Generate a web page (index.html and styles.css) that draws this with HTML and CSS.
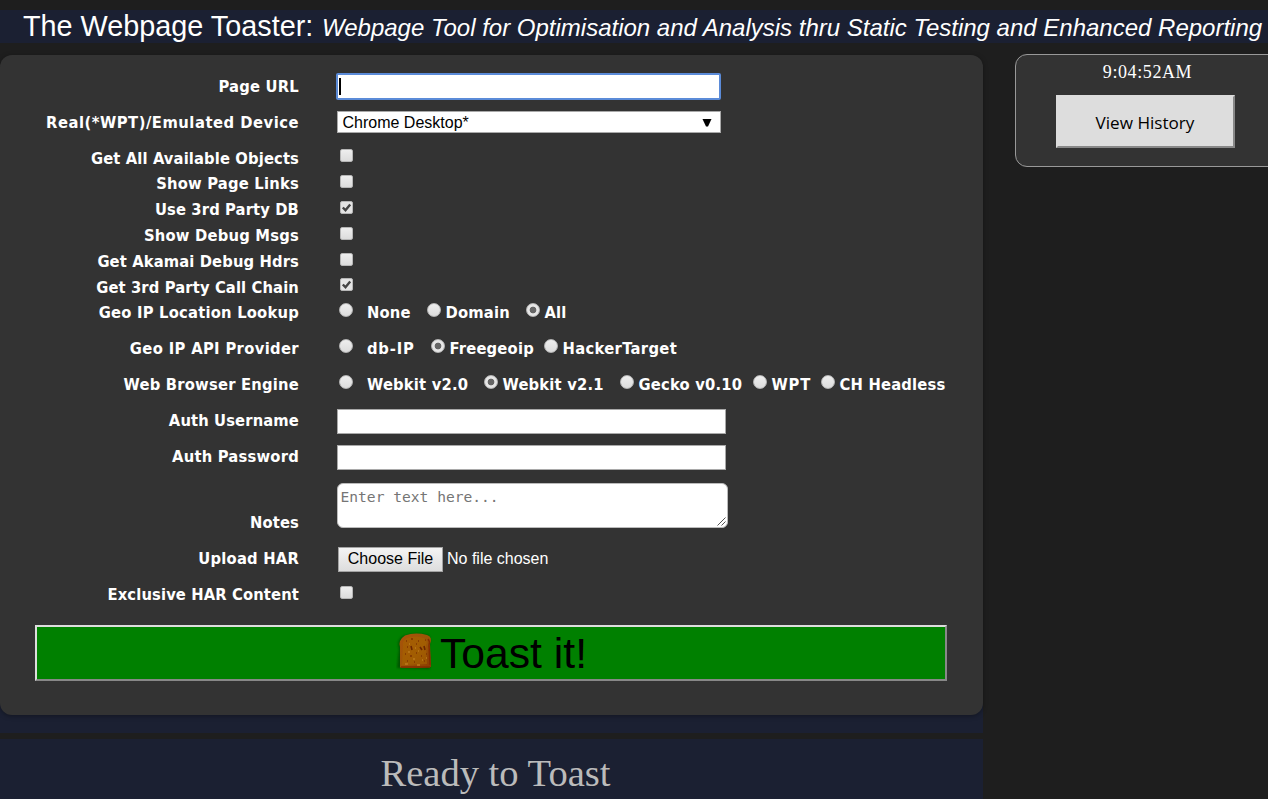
FILE: index.html
```
<!DOCTYPE html>
<html lang="en">
<head>
<meta charset="utf-8">
<title>The Webpage Toaster</title>
<link rel="stylesheet" href="styles.css">
</head>
<body>
<header class="banner"><span class="title">The Webpage Toaster:</span><em class="tagline">Webpage Tool for Optimisation and Analysis thru Static Testing and Enhanced Reporting</em></header>
<div class="columns">
<main class="main">
<form class="panel">
<div class="row"><label><span class="wide">Page URL</span></label><div class="field url"><i class="caret"></i></div></div>
<div class="row"><label><span class="widest">Real(*WPT)/Emulated Device</span></label><div class="field device"><span>Chrome Desktop*</span><svg width="10" height="8" viewBox="0 0 10 8"><path d="M.5 0h9L6 7.500H4z"/></svg></div></div>
<div class="checks">
<div class="row small"><label><span>Get All Available Objects</span></label><input type="checkbox"></div>
<div class="row small raised"><label><span class="wide">Show Page Links</span></label><input type="checkbox"></div>
<div class="row small"><label><span>Use 3rd Party DB</span></label><input type="checkbox" checked></div>
<div class="row small"><label><span class="wide">Show Debug Msgs</span></label><input type="checkbox"></div>
<div class="row small"><label><span>Get Akamai Debug Hdrs</span></label><input class="low" type="checkbox"></div>
<div class="row small"><label><span>Get 3rd Party Call Chain</span></label><input type="checkbox" checked></div>
<div class="row small"><label><span class="wide">Geo IP Location Lookup</span></label><div class="options geo">
<span class="opt"><input type="radio" name="geo"><b>None</b></span><span class="opt"><input type="radio" name="geo"><b>Domain</b></span><span class="opt"><input type="radio" name="geo" checked><b>All</b></span></div></div>
</div>
<div class="row"><label><span class="wider">Geo IP API Provider</span></label><div class="options api">
<span class="opt"><input type="radio" name="api"><b class="open">db-IP</b></span><span class="opt"><input type="radio" name="api" checked><b>Freegeoip</b></span><span class="opt"><input type="radio" name="api"><b class="wider">HackerTarget</b></span></div></div>
<div class="row"><label><span class="wide">Web Browser Engine</span></label><div class="options engine">
<span class="opt"><input type="radio" name="eng"><b>Webkit v2.0</b></span><span class="opt"><input type="radio" name="eng" checked><b>Webkit v2.1</b></span><span class="opt"><input type="radio" name="eng"><b>Gecko v0.10</b></span><span class="opt"><input type="radio" name="eng"><b class="open">WPT</b></span><span class="opt"><input type="radio" name="eng"><b>CH Headless</b></span></div></div>
<div class="row"><label><span>Auth Username</span></label><input class="field auth" type="text"></div>
<div class="row"><label><span class="wide">Auth Password</span></label><input class="field auth" type="password"></div>
<div class="row notes"><label><span>Notes</span></label><div class="area"><span>Enter text here...</span><svg width="9" height="9" viewBox="0 0 9 9"><path d="M.5 8.500l8-8M4.500 8.500l4-4"/></svg></div></div>
<div class="row"><label><span class="wide">Upload HAR</span></label><div class="file"><span class="choose">Choose File</span><span class="none">No file chosen</span></div></div>
<div class="row"><label><span>Exclusive HAR Content</span></label><input type="checkbox"></div>
<button class="toast" type="button">
<svg width="38" height="42" viewBox="0 0 38 42">
<defs><linearGradient id="crust" x1="0" y1="0" x2="1" y2="1"><stop offset="0" stop-color="#a8520a"/><stop offset=".55" stop-color="#9c5506"/><stop offset="1" stop-color="#8a3a00"/></linearGradient>
<filter id="soft" x="-20%" y="-20%" width="140%" height="140%"><feGaussianBlur stdDeviation="1.2"/></filter>
<filter id="grain"><feGaussianBlur stdDeviation=".5"/></filter></defs>
<path d="M1 36L3 17Q0 8 7 4Q20 0 32 3Q36 6 33 14L34 37Z" fill="#003c00" opacity=".65" filter="url(#soft)"/>
<path d="M4 35.500V15Q2 8 9 3.500Q19 0 31 3Q37 5 34 12L35 35Q19 36.500 4 35.500Z" fill="url(#crust)"/>
<g filter="url(#grain)"><path d="M6 33L7 14Q6 9 11 6Q20 3 28 6Q32 8 30 13L31 32Z" fill="#a5620a" opacity=".6"/>
<path d="M32 7q2 2 1 6l1 20M5 35h29" fill="none" stroke="#852d00" stroke-width="1.500"/>
<path d="M15 14l1 4M24 15l2 3M28 14l1 4" stroke="#6b2500" stroke-width="1.600"/>
<path d="M10 9h1M15 7h2M22 9h1M29 8h1M11 15h1M20 12h1M9 22h1M14 24h2M20 21h1M25 24h1M30 22h1M11 29h1M18 30h1M28 29h1" stroke="#803600" stroke-width="1.300"/>
<path d="M13 12h1M19 16h1M12 20h2M22 19h1M17 27h2M26 28h1M9 32h3M21 33h3M30 26h1" stroke="#bd7b18" stroke-width="1.300"/></g>
</svg><span>Toast it!</span></button>
</form>
<div class="status">Ready to Toast</div>
</main>
<aside class="side"><time>9:04:52AM</time><button class="history" type="button"><span>View History</span></button></aside>
</div>
</body>
</html>
```
FILE: styles.css
```
* { box-sizing: border-box; }
body { margin: 0; height: 799px; overflow: hidden; background: #1e1e1e; padding-top: 10px; }
.banner { height: 33px; width: 1268px; padding-left: 23px; background: #1b2032; color: #fff; white-space: nowrap; font-family: "Liberation Sans", Arial, sans-serif; line-height: 33px; display: flex; align-items: baseline; }
.title { font-size: 28.800px; width: 299px; }
.tagline { font-size: 24px; }
.columns { display: flex; gap: 32px; width: 1300px; margin-top: 12px; }
.main { width: 983px; flex: none; background: linear-gradient(transparent 640px, #1b2032 640px, #1b2032 678px, #1e1e1e 678px, #1e1e1e 684px, #1b2032 684px); height: 744px; }
.panel { height: 660px; padding: 13px 36px 0 35px; border-radius: 12px; background: #333; box-shadow: 0 1px 5px rgba(0,0,0,.35); }
.row { height: 36px; display: flex; align-items: center; font: bold 16.400px/22px "DejaVu Sans Condensed", Tahoma, sans-serif; font-stretch: condensed; color: #fff; }
.row.small { height: 25.750px; }
.checks { padding: 5px 0 4.750px; }
label { width: 264px; margin-right: 38px; padding-top: 2px; text-align: right; white-space: nowrap; flex: none; letter-spacing: .13px; }
.raised label { padding-top: 0; }
.wide { letter-spacing: .22px; }
.wider { letter-spacing: .36px; }
.widest { letter-spacing: .52px; }
.field { border: 1px solid #a9a9a9; background: #fff; height: 25px; margin: 3px 0 0; padding: 0; outline: 0; flex: none; }
.url { width: 385px; height: 27px; margin: 0 0 0 -1px; border: 2px solid #5b8bd8; border-radius: 2px; padding: 3px 1px; }
.caret { display: block; width: 2px; height: 17px; background: #000; }
.device { width: 384px; height: 22px; margin: 0; padding: 1px 8px 0 4.500px; display: flex; justify-content: space-between; align-items: center; color: #000; font: 16px/20px "Liberation Sans", Arial, sans-serif; }
.device svg { fill: #000; }
.auth { width: 389px; height: 25px; }
input[type=checkbox], input[type=radio] { appearance: none; margin: 0 0 4px 3px; width: 13px; height: 13px; flex: none; border: 1px solid #b6b6b6; border-radius: 2px; background: linear-gradient(#eee, #dcdcdc); }
input[type=checkbox].low { margin-bottom: 3px; }
input[type=checkbox]:checked { background: url("data:image/svg+xml,%3Csvg xmlns='http://www.w3.org/2000/svg' viewBox='0 0 11 11'%3E%3Cpath d='M1.8 5.500l2.700 2.700L9.200 2.500' fill='none' stroke='%23444' stroke-width='2.400'/%3E%3C/svg%3E") center / 11px 11px no-repeat, #e4e4e4; }
input[type=radio] { width: 14px; height: 14px; margin: 0 4.500px 4px 0; border-radius: 50%; }
input[type=radio]:checked { background: radial-gradient(circle, #666 0 3px, #e6e6e6 3.700px); }
.opt:first-child input { margin-right: 14px; }
.opt b { font-weight: 700; padding-top: 2px; letter-spacing: .2px; }
.opt b.wider { letter-spacing: .34px; }
.opt b.open { letter-spacing: .8px; }
.options { display: grid; padding-left: 2px; white-space: nowrap; }
.opt { display: flex; align-items: center; }
.geo { grid-template-columns: 88px 99px 60px; }
.api { grid-template-columns: 92px 113px 140px; }
.engine { grid-template-columns: 145px 136px 133px 68px 130px; }
.row.notes { height: 66px; align-items: flex-end; padding-bottom: 6px; }
.area { width: 391px; height: 45px; margin-bottom: 6px; padding: 3px 3px 3px 2.500px; border: 1px solid #bbb; border-radius: 6px; background: #fff; color: #757575; font: 14.600px/20px "DejaVu Sans Mono", monospace; display: flex; justify-content: space-between; }
.area svg { align-self: flex-end; fill: none; stroke: #555; margin: 0 -2px -2px 0; }
.file { display: flex; align-items: center; padding: 2px 0 0 1px; font: 16px/18px "Liberation Sans", Arial, sans-serif; }
.choose { width: 105px; height: 25px; border: 1px solid #a3a3a3; background: linear-gradient(#f4f4f4, #ddd); color: #000; text-align: center; line-height: 22px; }
.none { margin-left: 4px; }
.toast { width: 912px; height: 56px; margin-top: 13px; padding: 0 0 0 1px; border: 2px solid; border-color: #ddd #888 #888 #ddd; background: green; color: #000; font: 42.700px/52px "Liberation Sans", Arial, sans-serif; display: flex; justify-content: center; align-items: center; gap: 6px; }
.status { height: 84px; padding-top: 35px; padding-left: 8px; text-align: center; color: #bbb; font: 38.600px/46px "Liberation Serif", "Times New Roman", serif; }
.side { width: 265px; height: 113px; margin-top: -1px; border: 1px solid #999; border-radius: 12px; background: #333; padding: 6px 0 0; display: flex; flex-direction: column; align-items: center; color: #fff; font: 18px/22px "Liberation Serif", "Times New Roman", serif; }
time { letter-spacing: .6px; }
.history { width: 179px; height: 53px; margin: 12px 5px 0 0; border: 2px solid; border-color: #ddd #888 #888 #ddd; background: #ddd; color: #000; font: 17.100px/24px "Open Sans", "Segoe UI", sans-serif; padding: 2px 0 0; }
```
